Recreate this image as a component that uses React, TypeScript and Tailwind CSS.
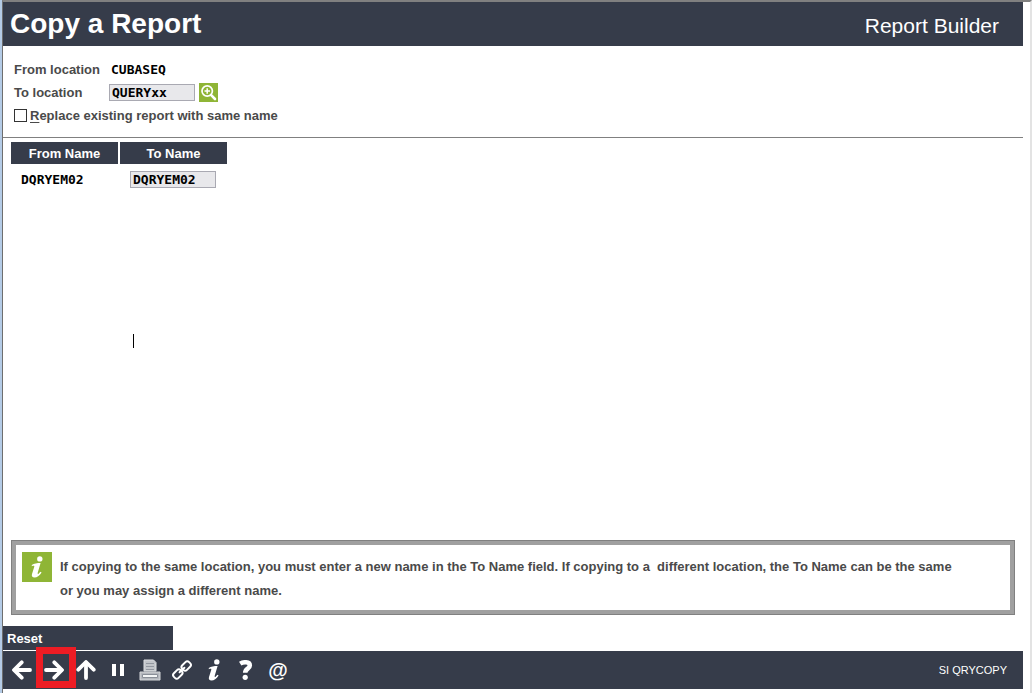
import { useState } from "react";

const toolButton = "relative flex h-8 w-8 items-center justify-center text-white";

const ArrowIcon = (props: { className?: string }) => (
  <svg viewBox="0 0 20 20" className={`h-5 w-5 ${props.className ?? ""}`} fill="none" stroke="currentColor" strokeWidth="3.8" strokeLinecap="round" strokeLinejoin="round">
    <path d="M2 10H17" />
    <path d="M10.3 2.3L18 10L10.3 17.7" />
  </svg>
);

const PauseIcon = () => (
  <svg viewBox="0 0 20 20" className="h-5 w-5" fill="currentColor">
    <path d="M4 4H8V16H4Z M12 4H16V16H12Z" />
  </svg>
);

const PrinterIcon = () => (
  <svg viewBox="0 0 22 22" className="h-[22px] w-[22px]">
    <path d="M5 1H14.5L17 3.5V12H5Z" fill="#c2c5ca" stroke="#dcdee1" />
    <path d="M7 4.5H15 M7 7.5H15 M7 10.5H15" stroke="#9297a0" />
    <path d="M1 13H21V21H1Z" fill="#b4b7bd" stroke="#d5d7da" />
    <path d="M3.5 15.5H18.5V18.5H3.5Z" fill="#f4f5f6" stroke="#8a8f98" />
  </svg>
);

const LinkIcon = () => (
  <svg viewBox="0 0 22 22" className="h-[22px] w-[22px]" fill="none" stroke="currentColor" strokeWidth="2">
    <rect x="10.4" y="3.7" width="9.6" height="6.6" rx="2.6" transform="rotate(-45 15.2 7)" />
    <rect x="2" y="11.7" width="9.6" height="6.6" rx="2.6" transform="rotate(-45 6.8 15)" />
    <path d="M8.6 13.2L13.4 8.8" strokeLinecap="round" />
  </svg>
);

const InfoIcon = (props: { className: string }) => (
  <svg viewBox="0 0 12 22" className={props.className} fill="currentColor">
    <circle cx="8.8" cy="2.9" r="2.7" />
    <path d="M0.8 8.9C3 7.5 6 7 9.6 7L6.8 16.6C6.4 18.2 7 18.2 7.8 17.4L9.4 15.7L10.6 16.6C8.4 20 6 21.6 3.6 21.6C1.2 21.6 0.4 20 1 18L3.2 11C3.6 9.8 3 9.6 0.8 10.2Z" />
  </svg>
);

const HelpIcon = () => (
  <svg viewBox="0 0 14 20" className="h-5 w-[14px]">
    <path d="M1.2 3.6C4.2 1.8 10.8 1.4 10.8 5.4C10.8 8.8 6.2 8.4 6.2 12.8" fill="none" stroke="currentColor" strokeWidth="4.6" />
    <circle cx="6.2" cy="17.3" r="2.6" fill="currentColor" />
  </svg>
);

const SearchIcon = () => (
  <svg viewBox="0 0 19 19" className="h-[19px] w-[19px]" fill="none" stroke="#fff">
    <circle cx="8.2" cy="8" r="5.2" strokeWidth="1.7" />
    <path d="M5.5 8H11 M8.2 5.3V10.7" strokeWidth="1.5" />
    <path d="M12.2 12.2L16 16" strokeWidth="2.6" strokeLinecap="round" />
  </svg>
);

const Header = () => (
  <header className="flex h-11 items-center justify-between bg-[#363c4a] pr-6 pl-[7px] font-normal text-white">
    <h1 className="text-[28px] font-bold">Copy a Report</h1>
    <div className="pt-1 text-[21px]">Report Builder</div>
  </header>
);

const monoText = "font-['DejaVu_Sans_Mono',monospace] text-[13px] font-bold text-black";
const field = `h-[17px] w-[86px] border border-[#a9a9b2] bg-[#e8e8eb] px-[2px] outline-none ${monoText}`;

const LocationForm = () => {
  const [location, setLocation] = useState("QUERYxx");
  const [replace, setReplace] = useState(false);

  return (
    <section className="border-b border-[#808080] px-[11px] pt-3 pb-[10px]">
      <div className="flex h-[23px] items-center">
        <div className="w-[97px]">From location</div>
        <div className={monoText}>CUBASEQ</div>
      </div>
      <div className="flex h-[23px] items-center">
        <label htmlFor="to-location" className="w-[95px]">To location</label>
        <input id="to-location" className={field} value={location} onChange={(event) => setLocation(event.target.value)} />
        <button type="button" aria-label="Search locations" className="ml-1 bg-[#8fb536]">
          <SearchIcon />
        </button>
      </div>
      <div className="flex h-[23px] items-center gap-[3px]">
        <input
          id="replace"
          type="checkbox"
          className="h-[13px] w-[13px] appearance-none border border-[#333] bg-white checked:bg-[#363c4a]"
          checked={replace}
          onChange={(event) => setReplace(event.target.checked)}
        />
        <label htmlFor="replace"><span className="underline underline-offset-2">R</span>eplace existing report with same name</label>
      </div>
    </section>
  );
};

const NameTable = () => {
  const [name, setName] = useState("DQRYEM02");

  return (
    <table className="mt-1 ml-2 w-[216px] table-fixed">
      <thead>
        <tr className="h-[22px] text-white">
          <th className="border-r-2 border-white bg-[#363c4a] bg-clip-padding pt-px">From Name</th>
          <th className="bg-[#363c4a] pt-px">To Name</th>
        </tr>
      </thead>
      <tbody>
        <tr className="h-[31px]">
          <td className={`pl-[10px] ${monoText}`}>DQRYEM02</td>
          <td className="pl-[11px]">
            <input aria-label="To Name" className={`block ${field}`} value={name} onChange={(event) => setName(event.target.value)} />
          </td>
        </tr>
      </tbody>
    </table>
  );
};

const Notice = () => (
  <div className="mx-2 mb-[11px] border border-[#808080] bg-[#a0a0a0] p-1">
    <div className="flex min-h-[65px] items-start gap-2 bg-white pt-[7px] pr-12 pl-[6px]">
      <div className="flex h-[30px] w-[30px] shrink-0 items-center justify-center bg-[#8fb536] text-white">
        <InfoIcon className="h-[22px] w-3" />
      </div>
      <p className="pt-[3px] leading-6 whitespace-pre-wrap">
        {"If copying to the same location, you must enter a new name in the To Name field. If copying to a  different location, the To Name can be the same or you may assign a different name."}
      </p>
    </div>
  </div>
);

const Toolbar = () => (
  <footer className="flex h-[38px] items-center justify-between bg-[#363c4a] pr-4 pl-[3px] font-normal text-white">
    <div className="flex">
      <button type="button" aria-label="Back" className={toolButton}><ArrowIcon className="rotate-180" /></button>
      <button type="button" aria-label="Next" className={toolButton}>
        <ArrowIcon />
        <span className="absolute -top-[7px] -right-[6px] -bottom-[2px] -left-[2px] z-10 border-[7px] border-[#ed1c24]" />
      </button>
      <button type="button" aria-label="Up" className={toolButton}><ArrowIcon className="-rotate-90" /></button>
      <button type="button" aria-label="Pause" className={toolButton}><PauseIcon /></button>
      <button type="button" aria-label="Print" className={toolButton}><PrinterIcon /></button>
      <button type="button" aria-label="Link" className={toolButton}><LinkIcon /></button>
      <button type="button" aria-label="Information" className={toolButton}><InfoIcon className="h-[22px] w-3" /></button>
      <button type="button" aria-label="Help" className={toolButton}><HelpIcon /></button>
      <button type="button" aria-label="Email" className={`${toolButton} text-xl font-bold`}>@</button>
    </div>
    <div className="text-[11px]">SI QRYCOPY</div>
  </footer>
);

export default function App() {
  return (
    <div className="flex min-h-screen border-l-2 border-[#b4cbe6] bg-white font-['Liberation_Sans',Arial,sans-serif] text-[13px] font-bold text-[#4a4a4a]">
      <div className="flex grow flex-col border-t-2 border-r-2 border-l border-t-[#808080] border-r-[#e3e3e3] border-l-[#6e6e6e] pr-[7px] pb-1">
        <Header />
        <LocationForm />
        <main className="relative grow">
          <NameTable />
          <span className="absolute top-[196px] left-[130px] h-[14px] w-px bg-black" />
        </main>
        <Notice />
        <button type="button" className="mb-px h-6 w-[170px] bg-[#363c4a] pt-px pl-1 text-left text-white">Reset</button>
        <Toolbar />
      </div>
    </div>
  );
}
